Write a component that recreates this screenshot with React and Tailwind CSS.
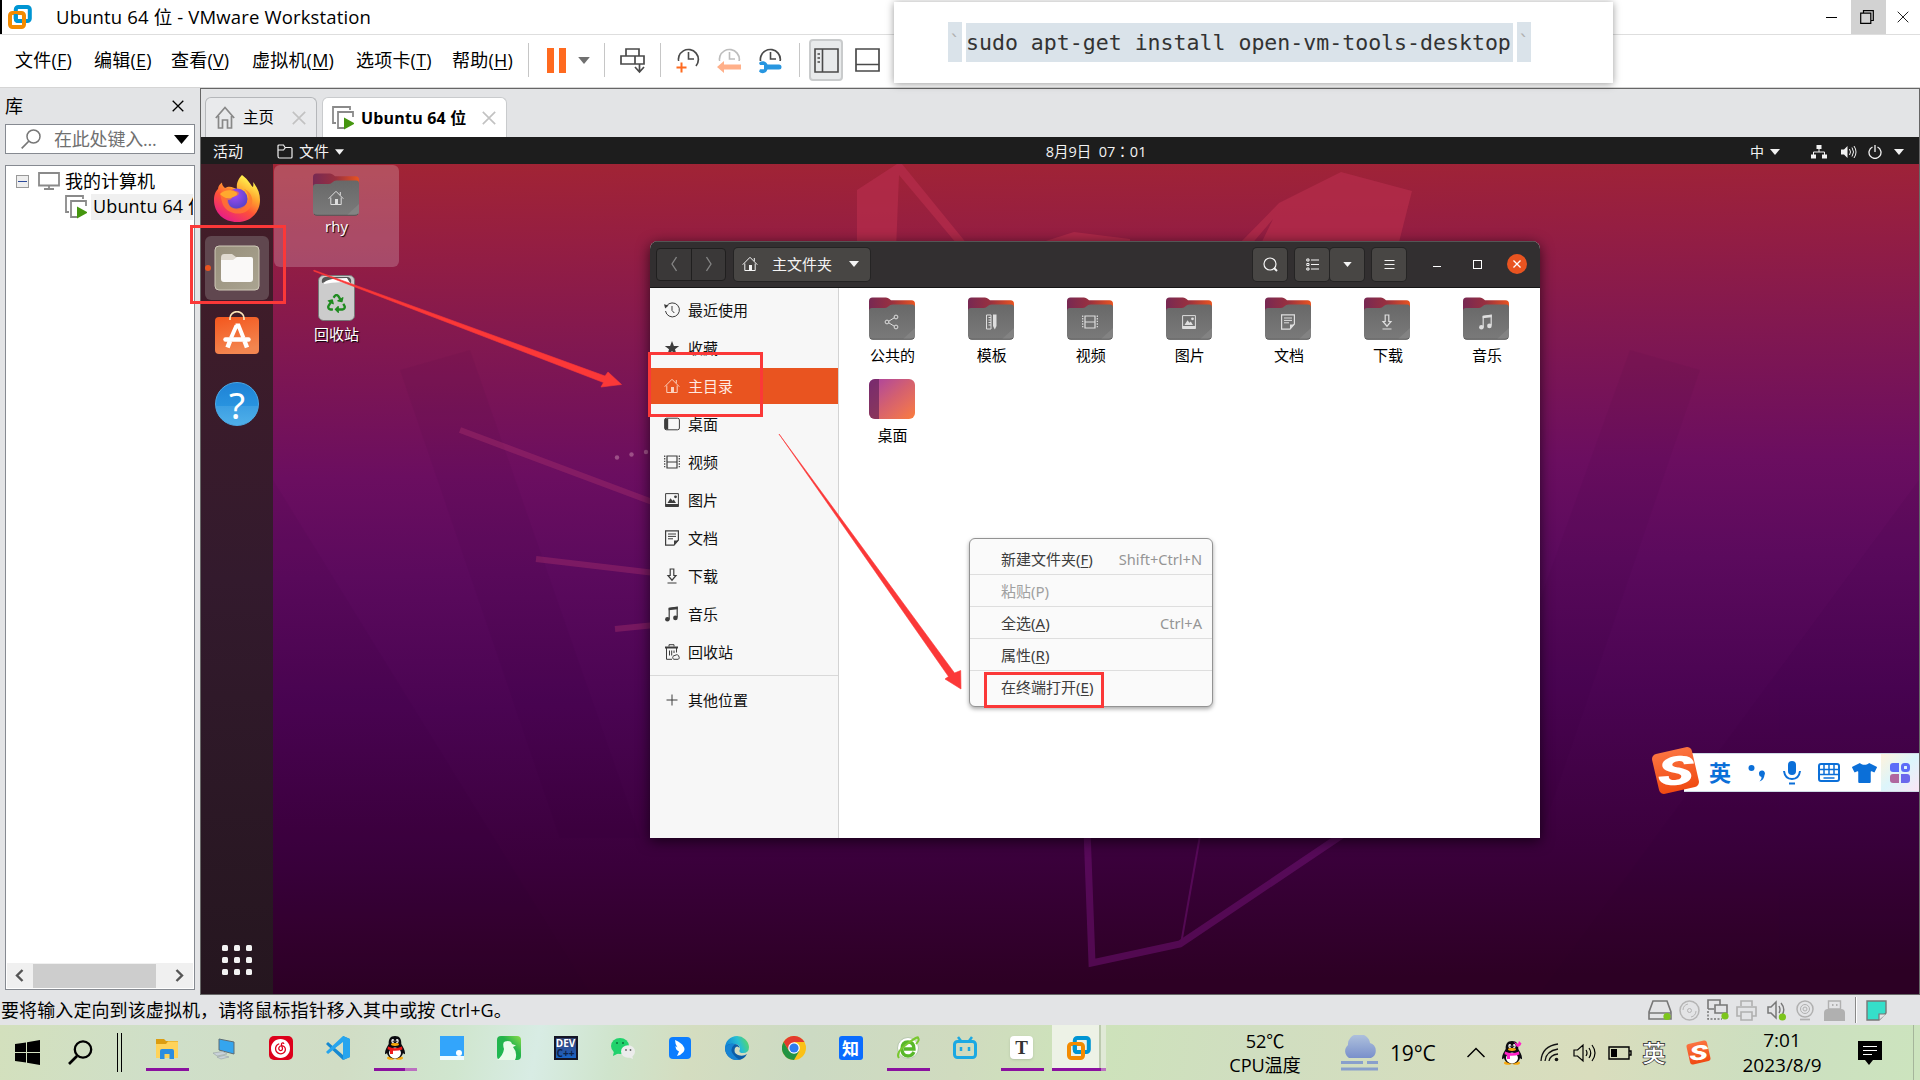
import React from "react";
import { FaRecycle, FaTshirt } from "react-icons/fa";
import { SiNeteasecloudmusic } from "react-icons/si";

const UI = "font-['Open_Sans','Noto_Sans_CJK_SC',sans-serif]";

/* ---------- shared glyphs ---------- */
const Svg = ({ w, h, vb, className = "", children }) => (
  <svg width={w} height={h} viewBox={vb || `0 0 ${w} ${h}`} fill="none" className={`shrink-0 ${className}`}>{children}</svg>
);
const Tri = ({ w = 10, h = 6, className = "" }) => (
  <Svg w={w} h={h} vb="0 0 10 6" className={className}><path d="M0 0H10L5 6Z" fill="currentColor" /></Svg>
);
const VmwareLogo = ({ size = 24 }) => (
  <Svg w={size} h={size} vb="0 0 24 24">
    <rect x="7.8" y="2" width="14" height="14" rx="2.5" stroke="#0095d3" strokeWidth="4" />
    <rect x="2" y="8" width="14" height="14" rx="2.5" stroke="#f38b00" strokeWidth="4" />
    <path d="M7.8 9V13.5Q7.8 16 10.3 16H14" stroke="#0095d3" strokeWidth="4" />
  </Svg>
);
const VmIcon = () => (
  <Svg w={22} h={24}>
    <path d="M4 17H1V1H18V4" stroke="#8a8a8a" strokeWidth="1.8" />
    <path d="M12 22H6V6H21V11" stroke="#8a8a8a" strokeWidth="1.8" />
    <path d="M12 11.5L23 17.5L12 23.5Z" fill="#45960f" />
  </Svg>
);
const Cross = ({ s = 12, c = "#000", sw = 1.3 }) => (
  <Svg w={s} h={s} vb="0 0 12 12"><path d="M.7.7L11.3 11.3M11.3.7L.7 11.3" stroke={c} strokeWidth={sw} /></Svg>
);

/* 16px symbolic icons used in the sidebar and on folders */
const SYM = {
  recent: <><path d="M2.6 4A7 7 0 1 1 1.5 9" stroke="currentColor" /><path d="M0 2.2L1.2 6.4L4.6 3.6Z" fill="currentColor" /><path d="M8 4V8.5L10.3 11" stroke="currentColor" /></>,
  star: <path d="M8 1L9.9 6H15.2L11 9.2L12.5 14.4L8 11.3L3.5 14.4L5 9.2L.8 6H6.100Z" fill="currentColor" />,
  home: <><path d="M.7 8.7L8 1.300L15.300 8.700M12.300 2V5.200M2.800 7.500V14.500H13.200V7.500" stroke="currentColor" /><path d="M7 9H10V15H7Z" fill="currentColor" /></>,
  desktop: <><rect x=".6" y="2.200" width="14.800" height="11.600" rx="1.800" stroke="currentColor" /><path d="M1 2.500H4.200V13.500H1Z" fill="currentColor" /></>,
  video: <><path d="M.7 1.500V14.500M15.300 1.500V14.500" stroke="currentColor" strokeDasharray="1.400 1.200" strokeWidth="1.200" /><path d="M3 2H13V14H3ZM3 8H13" stroke="currentColor" strokeWidth="1.200" /></>,
  image: <><path d="M1.600 1.600H14.400V14.400H1.600Z" stroke="currentColor" /><path d="M1.500 12H14.500V15H1.500ZM3.500 11L6.500 6.200L8.500 8.800L9.800 7.600L12 11Z" fill="currentColor" /><circle cx="11.500" cy="4.800" r="1.400" fill="currentColor" /></>,
  doc: <><path d="M14.400 10V.9H1.600V15.100H10Z" stroke="currentColor" strokeWidth="1.200" /><path d="M4 4H12M4 6.400H12M4 8.800H9" stroke="currentColor" /><path d="M10 10.500H14.500L10 15Z" fill="currentColor" /></>,
  down: <path d="M6.200 1H9.800V7.500H12L8 12.200L4 7.500H6.200ZM3.500 15H12.500" stroke="currentColor" strokeWidth="1.200" />,
  music: <><path d="M5.200 13V2.300L13.200 1.300V11.500" stroke="currentColor" strokeWidth="1.200" /><path d="M4.700 1.900L13.700.7V3.200L4.700 4.200Z" fill="currentColor" /><circle cx="3.400" cy="13.200" r="2.300" fill="currentColor" /><circle cx="11.400" cy="11.900" r="2.300" fill="currentColor" /></>,
  trash: <><path d="M1 3.500H14" stroke="currentColor" strokeWidth="2" /><path d="M5 2.500V.7H10V2.500M2.500 4V15.300H8M5.500 6.500V11.500M7.700 6.500V11.500M10 6.500V9M12.500 4V8.500" stroke="currentColor" /><path d="M9 14.500A2 2 0 0 1 11 11.500A2.300 2.300 0 0 1 15 13A1.500 1.500 0 0 1 14 15.300H10A1 1 0 0 1 9 14.500Z" stroke="currentColor" /></>,
  plus: <path d="M8 2.500V13.500M2.500 8H13.500" stroke="currentColor" />,
  share: <><path d="M11.500 3L3.500 8L11.500 13" stroke="currentColor" /><circle cx="12" cy="3" r="1.900" fill="#707070" stroke="currentColor" /><circle cx="3" cy="8" r="1.900" fill="#707070" stroke="currentColor" /><circle cx="12" cy="13" r="1.900" fill="#707070" stroke="currentColor" /></>,
  template: <><path d="M3.500 1H8V15H3.500Z" stroke="currentColor" /><path d="M5.500 3.500H8M5.500 6H8M5.500 8.500H8M5.500 11H8" stroke="currentColor" /><path d="M10 .5H13.500V12L11.800 15.500L10 12Z" fill="currentColor" /></>,
};
const Sym = ({ name, className = "" }) => <Svg w={16} h={16} className={className}>{SYM[name]}</Svg>;

const Folder = ({ name }) => (
  <div className="-ml-[2px] grid h-[42px] w-[46px] shrink-0">
    <Svg w={46} h={43} className="col-start-1 row-start-1">
      <defs>
        <linearGradient id="fback" x1="0" x2="1"><stop stopColor="#772953" /><stop offset=".5" stopColor="#99303f" /><stop offset="1" stopColor="#e95420" /></linearGradient>
        <linearGradient id="ffront" x1="0" y1="0" x2="0" y2="1"><stop stopColor="#686868" /><stop offset="1" stopColor="#7a7a7a" /></linearGradient>
      </defs>
      <path d="M0 4Q0 .5 3.500 .5H17Q19 .5 20.500 2L22 3.300H42.500Q46 3.300 46 7V20H0Z" fill="url(#fback)" />
      <path d="M0 14Q0 11 3 11H16Q18 11 19.500 9.300Q21 7.500 23.500 7.500H43Q46 7.500 46 10.500V38.500Q46 42.500 42 42.500H4Q0 42.500 0 38.500Z" fill="url(#ffront)" />
      <path d="M34 42L46 31V38.500Q46 42 42 42Z" fill="#888" opacity=".7" />
      <path d="M1 41Q2 42.300 4 42.300H42Q44 42.300 45 41" stroke="#4a4a4a" strokeWidth=".8" />
    </Svg>
    <Sym name={name} className="col-start-1 row-start-1 mt-[17px] ml-[15px] text-[#dedede]" />
  </div>
);

/* ---------- VMware chrome ---------- */
function TitleBar() {
  return (
    <div className="flex h-[35px] shrink-0 border-b border-[#dedede] bg-white">
      <div className="h-[34px] w-[2px] bg-black" />
      <div className="flex flex-1 items-center pl-[6px]">
        <VmwareLogo />
        <span className="ml-6 -mt-px text-[18.500px] tracking-[0.150px]">Ubuntu 64 位 - VMware Workstation</span>
      </div>
      <div className="flex w-[26px] items-center pl-px"><div className="h-px w-[11px] bg-black" /></div>
      <div className="grid w-[35px] place-items-center bg-[#d2d2d2] pr-[4px]">
        <Svg w={14} h={14}><path d="M3.500 3V.7H13.300V10.500H11M.7 3.200H10.800V13.300H.7Z" stroke="#000" strokeWidth="1.200" /></Svg>
      </div>
      <div className="flex w-[34px] items-center pl-[11px]"><Cross c="#222" sw={1} /></div>
    </div>
  );
}

const MenuItem = ({ t, k, w }) => (
  <div className={`${w} shrink-0 whitespace-nowrap text-[18px] tracking-[0.200px]`}>{t}(<span className="underline decoration-1 underline-offset-2">{k}</span>)</div>
);
const Sep = () => <div className="h-[34px] w-px shrink-0 bg-[#c6c6c6]" />;
const Clock = ({ c = "#4a4a4a", children }) => (
  <Svg w={25} h={28}><path d="M3 17A10 10 0 1 1 20 20" stroke={c} strokeWidth="1.700" /><path d="M12.500 6V13H18" stroke={c} strokeWidth="1.600" />{children}</Svg>
);

function MenuBar() {
  return (
    <div className="flex h-[53px] shrink-0 items-center border-b border-[#d5d5d5] bg-white pb-[2px] pl-[15px] text-black">
      <MenuItem t="文件" k="F" w="w-[79px]" />
      <MenuItem t="编辑" k="E" w="w-[77px]" />
      <MenuItem t="查看" k="V" w="w-[81px]" />
      <MenuItem t="虚拟机" k="M" w="w-[104px]" />
      <MenuItem t="选项卡" k="T" w="w-[96px]" />
      <MenuItem t="帮助" k="H" w="w-[76px]" />
      <Sep />
      <div className="ml-[18px] flex gap-[5px]"><div className="h-[25px] w-[7px] bg-[#ff6a1f]" /><div className="h-[25px] w-[7px] bg-[#ff6a1f]" /></div>
      <Tri w={12} h={7} className="ml-3 text-[#707070]" />
      <div className="w-[14px]" />
      <Sep />
      <Svg w={26} h={27} className="ml-[15px]"><path d="M6 2H19V9H6ZM1 9H15V17H1ZM15 9H24V17H15ZM19.500 17V24M15 20L19.500 25L24 20" stroke="#4a4a4a" strokeWidth="1.700" /></Svg>
      <div className="w-[14px]" />
      <Sep />
      <div className="ml-[15px] flex gap-4">
        <Clock><path d="M0 15H10V28H0Z" fill="#fff" /><path d="M5.500 16.500V26.500M.5 21.500H10.500" stroke="#ff6a1f" strokeWidth="2" /></Clock>
        <Clock c="#bdbdbd"><path d="M0 15H24V28H0Z" fill="#fff" /><path d="M0 21L7 15V18.500H24V23.500H7V27Z" fill="#ffb08a" /></Clock>
        <Clock><path d="M0 15H24V28H0Z" fill="#fff" /><path d="M1 17A5 5 0 0 1 9.500 18.500H21A2.500 2.500 0 0 1 21 23.500H9.500A5 5 0 0 1 1 25.500L2 23.300H6V19H2Z" fill="#2796e0" /></Clock>
      </div>
      <div className="w-[16px]" />
      <Sep />
      <div className="ml-[9px] grid h-[42px] w-[34px] place-items-center rounded border-2 border-[#c9cbcc] bg-[#e8eaeb]">
        <Svg w={25} h={25}><path d="M1 1H24V24H1ZM8.500 1V24M3.500 6H6M3.500 10H6M3.500 14H6" stroke="#4a4a4a" strokeWidth="1.600" /></Svg>
      </div>
      <Svg w={25} h={24} className="ml-[12px]"><path d="M1 1H24V23H1ZM1 16.500H24" stroke="#4a4a4a" strokeWidth="1.700" /></Svg>
    </div>
  );
}

function CommandPopup() {
  return (
    <div className="absolute top-[2px] left-[894px] z-20 flex h-[81px] w-[719px] items-center bg-white pb-px pl-[54px] font-['DejaVu_Sans_Mono',monospace] shadow-[0_1px_8px_rgba(0,0,0,0.4)]">
      <div className="h-10 w-[14px] bg-[#dae3ea] text-center text-[20px] leading-10 text-[#b0b0b0]">`</div>
      <div className="ml-1 h-[39px] w-[547px] bg-[#dae3ea] text-[21.550px] leading-[40px] whitespace-nowrap text-[#333]">sudo apt-get install open-vm-tools-desktop</div>
      <div className="ml-1 h-10 w-[14px] bg-[#dae3ea] text-center text-[20px] leading-10 text-[#b0b0b0]">`</div>
    </div>
  );
}

function Library() {
  return (
    <div className="flex w-[200px] shrink-0 flex-col pl-[5px]">
      <div className="flex h-[36px] items-center pr-[16px]">
        <span className="flex-1 text-[18px]">库</span><Cross s={12} />
      </div>
      <div className="flex h-[30px] w-[190px] items-center border border-[#868a91] bg-white pl-[15px]">
        <Svg w={20} h={20}><circle cx="12.500" cy="7.500" r="6.500" stroke="#777" strokeWidth="1.500" /><path d="M8 12L.7 19.300" stroke="#777" strokeWidth="1.700" /></Svg>
        <span className="ml-[13px] flex-1 text-[18px] tracking-[-0.200px] whitespace-nowrap text-[#707070]">在此处键入...</span>
        <Tri w={15} h={9} className="mr-[5px]" />
      </div>
      <div className="mt-[11px] flex h-[825px] w-[190px] flex-col border border-[#868a91] bg-white p-px">
        <div className="mt-px flex h-[26px] items-center pl-[9px]">
          <div className="mt-px grid size-[13px] place-items-center border border-[#999] bg-[#eee]"><div className="h-px w-[9px] bg-[#2c4a9a]" /></div>
          <Svg w={22} h={18} className="ml-[9px]"><path d="M1 1H21V13.500H1ZM11 13.500V17M6 17H16" stroke="#8a8a8a" strokeWidth="1.800" /></Svg>
          <span className="ml-[5px] text-[18px]">我的计算机</span>
        </div>
        <div className="flex h-[26px] items-center overflow-hidden pl-[58px]">
          <VmIcon />
          <div className="ml-1 h-[26px] w-[102px] shrink-0 overflow-hidden bg-[#f0f0f0] pl-[2px] text-[18px] leading-[25px] tracking-[0.150px] whitespace-nowrap">Ubuntu 64 位</div>
        </div>
        <div className="flex-1" />
        <div className="flex h-[25px] items-center bg-[#f0f0f0]">
          <Svg w={9} h={13} className="ml-[8px]"><path d="M7.500 1L2 6.500L7.500 12" stroke="#555" strokeWidth="2.400" /></Svg>
          <div className="ml-[9px] h-6 w-[123px] bg-[#cdcdcd]" />
          <Svg w={9} h={13} className="ml-[19px]"><path d="M1.500 1L7 6.500L1.500 12" stroke="#555" strokeWidth="2.400" /></Svg>
        </div>
      </div>
    </div>
  );
}

function Tabs() {
  return (
    <div className="flex h-[48px] shrink-0 items-end gap-[6px] bg-[#e3e4e6] pl-1">
      <div className="flex h-[40px] w-[112px] items-center rounded-t-md border border-b-0 border-[#b5b7ba] bg-[#e9eaec] pl-[9px]">
        <Svg w={20} h={23}><path d="M.8 12L10 1.500L19.200 12M3.500 10V22H7.500V14H12.500V22H16.500V10" stroke="#888" strokeWidth="1.700" /></Svg>
        <span className="ml-[8px] flex-1 text-[15.500px]">主页</span>
        <span className="mr-[10px]"><Cross s={14} c="#c2c2c2" sw={1.400} /></span>
      </div>
      <div className="-ml-px flex h-[40px] w-[185px] items-center rounded-t-md border border-b-0 border-[#c9cbcd] bg-white pl-[9px]">
        <VmIcon />
        <span className="mt-px ml-[7px] flex-1 text-[16px] font-bold tracking-[0.200px] whitespace-nowrap">Ubuntu 64 位</span>
        <span className="mr-[10px]"><Cross s={14} c="#c2c2c2" sw={1.400} /></span>
      </div>
    </div>
  );
}

/* ---------- Ubuntu guest ---------- */
function TopBar() {
  return (
    <div className="grid h-[27px] shrink-0 grid-cols-3 items-center bg-[#1d1d1d] pt-[2px] text-[15px] text-[#f2f2f2]">
      <div className="flex items-center pl-3 text-[15px]">
        <span>活动</span>
        <Svg w={16} h={15} className="ml-[34px]"><path d="M1 12V2Q1 1 2 1H6.500L8 3.500H14Q15 3.500 15 4.500V13Q15 14 14 14H2.500Q1 14 1 12ZM1 6H6.500L8.500 3.500" stroke="currentColor" strokeWidth="1.200" /></Svg>
        <span className="ml-[6px]">文件</span>
        <Tri w={9} className="ml-[6px]" />
      </div>
      <div className="pl-[272px] text-[14.500px] whitespace-pre">8月9日  07<span className="font-['Noto_Sans_CJK_TC',sans-serif]" lang="zh-TW">：</span>01</div>
      <div className="flex items-center justify-end pr-[15px]">
        <span className="text-[14px]">中</span>
        <Tri className="mr-[31px] ml-[6px]" />
        <Svg w={16} h={14}><path d="M5.500 0H10.500V4H5.500ZM0 9.500H5V13.500H0ZM11 9.500H16V13.500H11Z" fill="currentColor" /><path d="M8 4V7M2.500 10V7H13.500V10" stroke="currentColor" /></Svg>
        <Svg w={16} h={14} className="ml-[14px]"><path d="M0 4.500H3L6.500 1V13L3 9.500H0Z" fill="currentColor" /><path d="M8.500 4Q10.500 7 8.500 10M11 2.500Q14 7 11 11.500M13 1Q17 7 13 13" stroke="currentColor" /></Svg>
        <Svg w={14} h={14} className="ml-[11px]"><path d="M4.500 2A6 6 0 1 0 9.500 2M7 0V7" stroke="currentColor" strokeWidth="1.300" /></Svg>
        <Tri className="ml-[12px]" />
      </div>
    </div>
  );
}

const Firefox = () => (
  <Svg w={46} h={48}>
    <defs>
      <linearGradient id="ffx" x1=".85" y1="0" x2=".25" y2="1"><stop offset=".1" stopColor="#fff44f" /><stop offset=".38" stopColor="#ffa22e" /><stop offset=".62" stopColor="#ff5237" /><stop offset="1" stopColor="#e5178f" /></linearGradient>
      <radialGradient id="ffg" cx=".4" cy=".3" r=".8"><stop stopColor="#a24df5" /><stop offset="1" stopColor="#4b3fc0" /></radialGradient>
    </defs>
    <path d="M28 0C35 5 37 11 39 12C39.500 10 39.500 9 39 7C44 13 46 19 46 25C46 38 36 47 23 47C10 47 0 38 0 25C0 19 2 16 4 14C4 11 6 9 8 7.500C8 10 9 11 11 13C16 10 20 13 23 14C22 8 25 3 28 0Z" fill="url(#ffx)" />
    <circle cx="23" cy="24" r="10.500" fill="url(#ffg)" />
    <path d="M6 19C9 13 16 12 21 16C26 16 26 20 22 21C17 21 19 25 14 25C14 33 22 36 30 31C37 27 35 18 30 14C40 18 41 30 33 36C24 42 10 37 8 27Z" fill="#ff7a30" opacity=".75" />
    <path d="M6 19C10 15 16 14 22 17C25 20 21 21 17 23C12 24 9 22 6 19Z" fill="#ffa92e" />
  </Svg>
);
const FilesIcon = () => (
  <Svg w={46} h={46}>
    <defs><linearGradient id="fig" x1="0" x2="1" y2="1"><stop stopColor="#978f7b" /><stop offset="1" stopColor="#aaa491" /></linearGradient></defs>
    <rect x="1" y="1" width="44" height="44" rx="4" fill="url(#fig)" stroke="#cfc9b8" strokeWidth="1" />
    <path d="M7 13Q7 9 10 9H18L22 12H36V17H7Z" fill="#e0dad0" />
    <path d="M7 15H19L23 12H37Q39 12 39 14V34Q39 37 36 37H10Q7 37 7 34Z" fill="#faf9f8" />
  </Svg>
);
const SoftwareIcon = () => (
  <Svg w={46} h={43}>
    <defs><linearGradient id="sfg" x1="0" x2=".3" y2="1"><stop stopColor="#f4561d" /><stop offset="1" stopColor="#f38650" /></linearGradient></defs>
    <rect x="1" y="6" width="44" height="37" rx="4" fill="url(#sfg)" />
    <path d="M16 9V7A7 6.300 0 0 1 30 7V9" stroke="#fbe3b7" strokeWidth="1.700" />
    <path d="M21.500 14.500H24.500L29.500 27M22.500 14.500L17 27" stroke="#fff" strokeWidth="4" /><path d="M16 30L13.500 36.500M30.500 30L33 36.500" stroke="#fff" strokeWidth="4.500" />
    <path d="M11.500 28.500H34.500" stroke="#fff" strokeWidth="4.500" strokeLinecap="round" />
  </Svg>
);

function Dock() {
  return (
    <div className="flex w-[72px] shrink-0 flex-col items-center bg-gradient-to-b from-[#441d27] via-[#331a2d] to-[#25161f] pt-[11px]">
      <Firefox />
      <div className="mt-[13px] flex h-[64px] w-[64px] items-center rounded-md bg-[#60474f]">
        <div className="size-[6px] rounded-full bg-[#e95420]" /><span className="ml-[3px]"><FilesIcon /></span>
      </div>
      <div className="mt-[11px]"><SoftwareIcon /></div>
      <div className="mt-[28px] grid size-[44px] place-items-center rounded-full border border-[#4ba9e6] bg-[linear-gradient(#1f82d6_0%,#2893df_54%,#3c9fe3_55%,#4fafe9_100%)] font-['Noto_Sans',sans-serif] text-[37px] leading-none text-white">?</div>
      <div className="mt-auto mb-[19px] grid grid-cols-3 gap-[6px]">
        {Array.from({ length: 9 }, (_, i) => <div key={i} className="size-[6px] rounded-[1.500px] bg-[#f2f2f2]" />)}
      </div>
    </div>
  );
}

const Wallpaper = () => (
  <svg className="absolute inset-0" width="1718" height="830" viewBox="201 164 1718 830" fill="none">
    <defs><linearGradient id="wp" x1="0" y1="0" x2=".03" y2="1">
      <stop stopColor="#a22434" /><stop offset=".1" stopColor="#951e42" /><stop offset=".22" stopColor="#821850" /><stop offset=".38" stopColor="#6b0e60" /><stop offset=".5" stopColor="#5b0a5d" /><stop offset=".66" stopColor="#4a0452" /><stop offset=".85" stopColor="#3a003b" /><stop offset="1" stopColor="#2d0024" />
    </linearGradient></defs>
    <rect x="201" y="164" width="1718" height="830" fill="url(#wp)" />
    <g fill="#20002a" opacity=".045">
      <path d="M273 480L590 994H273Z" /><path d="M400 370L470 350L640 838L560 838Z" /><path d="M1919 480L1540 994H1919Z" /><path d="M1700 370L1630 350L1540 600V838Z" />
    </g>
    <g fill="#b52d4b" opacity=".72">
      <path d="M897 164L857 190V250H896L899 175L962 250H972L902 164Z" />
      <path d="M1341 172L1412 191L1397 250H1258L1273 219L1250 246H1237L1279 203Z" />
      <path d="M1030 246L1074 232L1130 239V246Z" />
    </g>
    <g stroke="#a62f6b" opacity=".42" strokeWidth="6"><path d="M460 430L655 503M536 559L655 573M615 629L655 625" /></g>
    <g fill="#a96092" opacity=".8"><circle cx="617" cy="457.500" r="2.200" /><circle cx="631.500" cy="454.500" r="2.200" /><circle cx="646" cy="452" r="2.200" /></g>
    <g stroke="#6f1272" opacity=".55"><path d="M1087 830L1092 963L1180 944L1345 833" strokeWidth="7" /><path d="M1201 830L1181 944" strokeWidth="2" /></g>
  </svg>
);

const SIDE = [
  ["recent", "最近使用"], ["star", "收藏"], ["home", "主目录"], ["desktop", "桌面"], ["video", "视频"],
  ["image", "图片"], ["doc", "文档"], ["down", "下载"], ["music", "音乐"], ["trash", "回收站"],
];
const FOLDERS = [["share", "公共的"], ["template", "模板"], ["video", "视频"], ["image", "图片"], ["doc", "文档"], ["down", "下载"], ["music", "音乐"]];
const HB = "grid h-[33px] w-[34px] place-items-center rounded-[4px] bg-[#484644] shadow-[0_0_0_1px_#252424]";

function FileWindow() {
  return (
    <div className="absolute top-[77px] left-[449px] flex h-[597px] w-[890px] flex-col overflow-hidden rounded-t-lg bg-white shadow-[0_3px_14px_rgba(0,0,0,0.65)]">
      <div className="flex h-[47px] shrink-0 items-center border-t border-b border-t-[#555] border-b-[#161616] bg-[#322f30] pb-px pl-[6px] text-[#f4f4f4]">
        <div className="flex h-[33px] w-[70px] items-center rounded-[4px] border border-[#201f1f] bg-[#3a3838] text-[#858585]">
          <div className="grid h-full w-[35px] place-items-center border-r border-[#201f1f]"><Svg w={6} h={16}><path d="M5.500 1L1 8L5.500 15" stroke="currentColor" strokeWidth="1.300" /></Svg></div>
          <div className="grid flex-1 place-items-center"><Svg w={6} h={16}><path d="M.5 1L5 8L.5 15" stroke="currentColor" strokeWidth="1.300" /></Svg></div>
        </div>
        <div className="ml-2 flex h-[33px] w-[136px] items-center rounded-[4px] bg-[#484644] pl-2 shadow-[0_0_0_1px_#252424]">
          <Sym name="home" /><span className="ml-[14px] text-[15px]">主文件夹</span><Tri className="ml-[17px]" />
        </div>
        <div className="flex-1" />
        <div className={HB}><Svg w={15} h={15}><circle cx="7" cy="7" r="6" stroke="currentColor" strokeWidth="1.200" /><path d="M11 11L14 14" stroke="currentColor" strokeWidth="2" /></Svg></div>
        <div className="ml-2 flex gap-px">
          <div className={HB}><Svg w={13} h={13}><path d="M5 2H13M5 6.500H13M5 11H13" stroke="currentColor" strokeWidth="1.200" /><path d="M.8 1H3V3H.8ZM.8 5.500H3V7.500H.8ZM.8 10H3V12H.8Z" stroke="currentColor" /></Svg></div>
          <div className={HB}><Tri w={9} h={5} /></div>
        </div>
        <div className={`ml-2 ${HB}`}><Svg w={11} h={11}><path d="M.5 1.500H10.500M.5 5.500H10.500M.5 9.500H10.500" stroke="currentColor" strokeWidth="1.200" /></Svg></div>
        <div className="mt-1 ml-[27px] h-px w-2 bg-white" />
        <div className="ml-8 h-[9px] w-[9px] border border-white" />
        <div className="mr-[13px] ml-[25px] grid size-5 place-items-center rounded-full bg-[#e95420]"><Cross s={8} c="#fff" sw={2} /></div>
      </div>
      <div className="flex min-h-0 flex-1">
        <div className="w-[189px] shrink-0 border-r border-[#d3d3d3] bg-[#f7f7f7] pt-[4px] text-[15px] text-[#111]">
          {SIDE.map(([icon, label], i) => (
            <div key={label} className={i === 2 ? "mb-[2px] flex h-9 items-center bg-[#e95420] pl-[14px] text-[#ffe9e0]" : "mb-[2px] flex h-9 items-center pl-[14px]"}>
              <Sym name={icon} className={i === 2 ? "text-[#fbd0bd]" : "text-[#3d3d3d]"} />
              <span className="ml-2">{label}</span>
            </div>
          ))}
          <div className="mt-[5px] h-px bg-[#d9d9d9]" />
          <div className="mt-[6px] flex h-9 items-center pl-[14px]"><Sym name="plus" className="text-[#3d3d3d]" /><span className="ml-2">其他位置</span></div>
        </div>
        <div className="flex-1 pt-[9px] pl-[4px] text-[15px] text-black">
          <div className="flex">
            {FOLDERS.map(([icon, label]) => (
              <div key={label} className="flex h-[82px] w-[99.100px] flex-col items-center"><Folder name={icon} /><span className="mt-[5px] leading-[22px]">{label}</span></div>
            ))}
          </div>
          <div className="flex w-[99px] flex-col items-center">
            <div className="-ml-[2px] flex h-[40px] w-[46px] overflow-hidden rounded-md bg-gradient-to-br from-[#a93ca2] via-[#d4606f] to-[#fb7c38]"><div className="w-[10px] bg-[#5d1f55]/65" /></div>
            <span className="mt-[5px] leading-[22px]">桌面</span>
          </div>
        </div>
      </div>
    </div>
  );
}

const MENU = [["新建文件夹", "F", "Shift+Ctrl+N"], ["粘贴", "P", ""], ["全选", "A", "Ctrl+A"], ["属性", "R", ""], ["在终端打开", "E", ""]];
const ContextMenu = () => (
  <div className="absolute top-[374px] left-[768px] h-[169px] w-[244px] rounded-[6px] border border-[#939393] bg-[#fafafa] pt-[4px] font-['Noto_Sans','Noto_Sans_CJK_SC',sans-serif] text-[15px] text-[#3d3d3d] shadow-[0_2px_4px_rgba(0,0,0,0.35)]">
    {MENU.map(([t, k, s], i) => (
      <div key={t} className={i < 4 ? "flex h-8 items-center border-b border-[#dedede] pt-[2px] pr-[10px] pl-[31px]" : "flex h-8 items-center pr-[10px] pl-[31px]"}>
        <span className={i === 1 ? "flex-1 text-[#a0a0a0]" : "flex-1"}>{t}(<span className={i === 1 ? "" : "underline underline-offset-2"}>{k}</span>)</span>
        <span className="text-[14.600px] text-[#959595]">{s}</span>
      </div>
    ))}
  </div>
);

/* Red annotation boxes and arrows, in page coordinates. */
const Annotations = () => (
  <svg className="pointer-events-none absolute inset-0 z-10" width="1920" height="1080" viewBox="0 0 1920 1080" fill="none">
    <g stroke="#fb3838" strokeWidth="3">
      <rect x="191.500" y="226.500" width="93" height="76" /><rect x="649.500" y="353.500" width="112" height="62" /><rect x="985.500" y="673.500" width="117" height="33" />
    </g>
    <g fill="#fb3838">
      <path d="M313.500 271L314 270.200L605 376L608 372L621.500 384.500L601 387L603.500 382.500Z" stroke="#fb3838" strokeWidth=".6" />
      <path d="M779 434L954.500 673L960.700 670.500L961 689L945 679L948.500 676.500Z" stroke="#fb3838" strokeWidth=".6" />
    </g>
  </svg>
);

const SogouLogo = ({ size }) => (
  <Svg w={size} h={size} vb="0 0 48 48" className="overflow-visible">
    <defs><linearGradient id="sg" x1="0" x2="0" y2="1"><stop stopColor="#fb7340" /><stop offset="1" stopColor="#f04a12" /></linearGradient></defs>
    <rect x="4" y="4" width="40" height="40" rx="5" transform="rotate(-13 24 24)" fill="url(#sg)" />
    <text x="24" y="38" transform="rotate(-4 24 24)" textAnchor="middle" fontFamily="Roboto, sans-serif" fontWeight="900" fontSize="39" textLength="36" lengthAdjust="spacingAndGlyphs" fill="#fff" fontStyle="italic">S</text>
  </Svg>
);
const InputBar = () => (
  <div className="absolute top-[753px] left-[1684px] z-10 flex h-[39px] w-[235px] items-center border-y border-[#cfdbe5] bg-white text-[#0b6fd8]">
    <div className="-mt-[4px] -ml-[33px] flex"><SogouLogo size={49} /></div>
    <span className="ml-[9px] -mt-[2px] text-[22px] leading-none font-bold">英</span>
    <Svg w={19} h={20} className="ml-[17px]"><circle cx="3.500" cy="5" r="3" fill="currentColor" /><path d="M11 11A3 3 0 1 1 16.500 12Q16 17 11.500 18.500Q14 16 13.500 14Q11 13.500 11 11Z" fill="currentColor" /></Svg>
    <Svg w={18} h={24} className="ml-[16px]"><rect x="5" y="0" width="8" height="14" rx="4" fill="currentColor" /><path d="M1 10Q2 18 9 18Q16 18 17 10M6 22.500H12" stroke="currentColor" strokeWidth="2" /></Svg>
    <Svg w={22} h={19} className="ml-[17px]"><rect x="1" y="1" width="20" height="17" rx="2" stroke="currentColor" strokeWidth="2" /><path d="M1 6.500H21M1 11.500H21M6 2V12M11 2V12M16 2V12M5.500 15H16.500" stroke="currentColor" strokeWidth="1.500" /></Svg>
    <FaTshirt className="ml-[12px] h-[22px] w-[25px] shrink-0" />
    <div className="ml-[4px] grid h-full flex-1 place-items-center bg-gradient-to-br from-[#fff3dc] via-[#dcf5fb] to-[#fbe6f6]">
      <Svg w={20} h={20}><path d="M0 3Q0 0 3 0H9V9H3Q0 9 0 6Z" fill="#5b6df8" /><rect x="12.500" y="1.500" width="6" height="6" rx="2" stroke="#5b6df8" strokeWidth="3" /><path d="M0 14Q0 11 3 11H9V20H3Q0 20 0 17Z" fill="#b0679f" /><path d="M11 11H17Q20 11 20 14V17Q20 20 17 20H11Z" fill="#6a68ec" /></Svg>
    </div>
  </div>
);

/* ---------- status bar and Windows taskbar ---------- */
const Dot = ({ x, y }) => <circle cx={x} cy={y} r="3.600" fill="#7cc51c" />;
const StatusBar = () => (
  <div className="flex h-[30px] shrink-0 items-center bg-[#e3e4e6] pl-px text-[18px]">
    <span className="flex-1 tracking-[0.100px]">要将输入定向到该虚拟机，请将鼠标指针移入其中或按 Ctrl+G。</span>
    <div className="flex items-center pr-[33px] text-[#777]">
      <Svg w={24} h={21}><path d="M5 1H19L23 12V19H1V12ZM1 13H23" stroke="currentColor" strokeWidth="1.600" /><Dot x="19" y="16.500" /></Svg>
      <Svg w={21} h={21} className="ml-[7px] text-[#b5b5b5]"><circle cx="10.500" cy="10.500" r="9.500" stroke="currentColor" strokeWidth="1.500" /><circle cx="10.500" cy="10.500" r="2" stroke="currentColor" /><path d="M4 10A6.500 6.500 0 0 1 9 4M17 11A6.500 6.500 0 0 1 12 17" stroke="currentColor" /></Svg>
      <Svg w={22} h={22} className="ml-[7px]"><path d="M1 10V1H13V6M1 10H7M8 6H20V14H8Z" stroke="currentColor" strokeWidth="1.600" /><path d="M1 12V20H15" stroke="currentColor" strokeDasharray="2 1.500" strokeWidth="1.500" /><Dot x="18" y="17" /></Svg>
      <Svg w={21} h={21} className="ml-[7px] text-[#b0b0b0]"><path d="M5 6V1H16V6M5 16H1V7H20V16H16M5 12H16V20H5Z" stroke="currentColor" strokeWidth="1.600" /></Svg>
      <Svg w={19} h={21} className="ml-[10px]"><path d="M1 7H4L9 2V18L4 13H1Z" stroke="currentColor" strokeWidth="1.500" /><path d="M12 6Q14 10 12 13M14 3Q19 9 15 15" stroke="currentColor" strokeWidth="1.400" /><Dot x="15.400" y="17" /></Svg>
      <Svg w={18} h={21} className="ml-[10px] text-[#b0b0b0]"><circle cx="9" cy="9" r="8" stroke="currentColor" strokeWidth="1.500" /><circle cx="9" cy="9" r="4.500" stroke="currentColor" /><circle cx="9" cy="9" r="2" stroke="currentColor" /><path d="M4 19.500H14" stroke="currentColor" strokeWidth="1.700" /></Svg>
      <Svg w={21} h={21} className="ml-[10px] text-[#b0b0b0]"><path d="M4.500 1H16.500V9H4.500Z" stroke="currentColor" strokeWidth="1.400" /><path d="M8 4H9.500V6H8ZM12 4H13.500V6H12ZM0 13Q0 9 4 9H17Q21 9 21 13V21H0Z" fill="currentColor" /></Svg>
      <div className="ml-[10px] h-[26px] w-[2px] border-l border-[#888] bg-white" />
      <Svg w={21} h={21} className="ml-[9px]"><path d="M1 1H20V13L13 20H1Z" fill="#35dfca" stroke="#777" strokeWidth="1.400" /><path d="M13 20V14H20" fill="#e3e4e6" stroke="#777" strokeWidth="1.200" /></Svg>
    </div>
  </div>
);

const QQ = ({ scarf = "#ef1a1a", bow }) => (
  <Svg w={20} h={24}>
    <ellipse cx="6" cy="22" rx="4" ry="1.800" fill="#f8a90c" /><ellipse cx="14" cy="22" rx="4" ry="1.800" fill="#f8a90c" />
    <path d="M10 0C5 0 3.500 3.500 3.700 8C2 11 0 14 0 17C0 19 1 18 2 17C3 21 6 22.500 10 22.500S17 21 18 17C19 18 20 19 20 17C20 14 18 11 16.300 8C16.500 3.500 15 0 10 0Z" fill="#0b0b10" />
    <ellipse cx="10" cy="17" rx="6" ry="5.400" fill="#fff" /><ellipse cx="7.800" cy="5" rx="1.500" ry="2" fill="#fff" /><ellipse cx="12.200" cy="5" rx="1.500" ry="2" fill="#fff" />
    <circle cx="8.200" cy="5.200" r=".7" fill="#000" /><circle cx="11.800" cy="5.200" r=".7" fill="#000" /><ellipse cx="10" cy="8.500" rx="4" ry="1.400" fill="#f8a90c" />
    <path d="M3 10.500Q10 14 17 10.500L17.500 13.500Q13 15 8 14.700V18H5V14L2.500 13.300Z" fill={scarf} />
    {bow && <path d="M12 1L16 3L17 0L19.500 2.500L18 5L15 6Z" fill="#ff22c8" />}
  </Svg>
);

const APPS = [
  { i: <Svg w={24} h={24}><path d="M1 3H9L11 5H23V21H1Z" fill="#dc9d10" /><path d="M1 8H11L13 5.500H23V22H1Z" fill="#ffd35a" /><path d="M5 23V15Q5 13 7 13H17Q19 13 19 15V23H14.500V18H9.500V23Z" fill="#2c8de0" /></Svg>, u: "w-[43px] bg-[#8a119f]" },
  { i: <Svg w={24} h={24}><path d="M7 3L22 6V18L7 14Z" fill="#35a5ee" stroke="#5e6c75" /><path d="M1 17L11 15.500L15 18L5 20ZM5 21L12 19.500L17 21L9 23Z" fill="#c9d2d8" stroke="#8d979d" strokeWidth=".5" /></Svg> },
  { i: <div className="grid size-6 place-items-center rounded-[5px] bg-[#dd001b] text-white"><SiNeteasecloudmusic size={19} /></div> },
  { i: <Svg w={24} h={24}><path d="M17 0L24 3V21L17 24L2 10L0 8L2 6L17 19Z" fill="#1588d0" /><path d="M17 0L24 3V21L17 24V6L2 18L0 16L2 14Z" fill="#27a5ee" /><path d="M17 6.500V17.500L9.500 12Z" fill="#d3e0c9" /></Svg> },
  { i: <QQ />, u: "w-[43px] bg-[linear-gradient(90deg,#8a119f_72%,#bb70c0_72%)]" },
  { i: <div className="flex size-6 items-end justify-end border-b-4 border-[#f0fbff] bg-[#33a5fb]"><div className="mr-[2px] size-[6px] rounded-full bg-white" /></div> },
  { i: <Svg w={24} h={24}><defs><linearGradient id="brd" x1="0" x2="1" y1="1" y2="0"><stop stopColor="#1db954" /><stop offset=".6" stopColor="#25b34b" /><stop offset="1" stopColor="#8bdc4a" /></linearGradient></defs><rect width="24" height="24" rx="4" fill="url(#brd)" /><path d="M0 24Q6 20 7 13Q5 6 8 5.500Q14 4 15 8L19 9.500L16 11Q21 17 18 24Z" fill="#eafbea" /></Svg> },
  { i: <div className="flex h-6 w-6 flex-col items-center border-2 border-[#151525] bg-gradient-to-b from-[#303d6c] to-[#1665c8] text-[10px] leading-[10px] font-bold text-white"><span>DEV</span><span className="text-[#0d2146]">C++</span></div> },
  { i: <Svg w={24} h={24}><ellipse cx="9" cy="10" rx="9" ry="8" fill="#20d26c" /><path d="M3 15L2 20L8 17Z" fill="#20d26c" /><ellipse cx="17" cy="15.500" rx="7" ry="6.200" fill="#ececec" /><path d="M21 19L22 23L17 21Z" fill="#ececec" /><circle cx="6" cy="7" r="1" fill="#08753a" /><circle cx="12" cy="7" r="1" fill="#08753a" /><circle cx="15" cy="14" r=".9" fill="#666" /><circle cx="19.500" cy="14" r=".9" fill="#666" /></Svg> },
  { i: <Svg w={24} h={24}><rect x="1" y="1" width="22" height="22" rx="4" fill="#0c7dff" /><path d="M7 4Q14 7 15.500 10.500Q17.500 13 15.500 16Q13 19 9 20L11 15.500Q7.500 14 7.500 10L9.500 11.500Q7 8 7 4Z" fill="#fff" /></Svg> },
  { i: <Svg w={24} h={24}><defs><linearGradient id="edg" x1="0" x2="1" y1=".3"><stop stopColor="#1187d8" /><stop offset=".5" stopColor="#27bfd2" /><stop offset="1" stopColor="#65dc4e" /></linearGradient></defs><path d="M12 0A12 12 0 0 1 24 11Q24 17 18 17Q13 17 15 13Q15 8 9 8Q4 8 0 12A12 12 0 0 1 12 0Z" fill="url(#edg)" /><path d="M0 12Q3 7 9 8Q14 8 14.500 12Q12 9 10 12Q8 17 13 19Q18 21 22 18Q19 24 12 24A12 12 0 0 1 0 12Z" fill="#0b5da8" /><path d="M0 12Q3 7 10 8Q4 13 8 18T15 23.600A12 12 0 0 1 0 12Z" fill="#1683d3" /></Svg> },
  { i: <Svg w={24} h={24}><circle cx="12" cy="12" r="12" fill="#fbc116" /><path d="M1.600 6A12 12 0 0 1 22.400 6H12V12L7 15Z" fill="#e33b2e" /><path d="M1.600 6A12 12 0 0 0 12 24L17.200 15L12 12L7 15Z" fill="#229342" /><circle cx="12" cy="12" r="5.800" fill="#fff" /><circle cx="12" cy="12" r="4.600" fill="#2e7cf0" /></Svg> },
  { i: <div className="grid size-6 place-items-center rounded-[3px] bg-[#0a6cff] text-[17px] leading-none font-bold text-white">知</div> },
  { i: <Svg w={24} h={24}><circle cx="12" cy="12" r="10.500" fill="#fff" stroke="#b7c8ae" /><path d="M18 16Q16 20 12 20Q6 20 6 13T12 6Q18 6 18 13H8" stroke="#59b82a" strokeWidth="3.300" /><path d="M3 22Q-1 17 11 8T22 2Q24 4 20 8" stroke="#79c82f" strokeWidth="2" /></Svg>, u: "w-[43px] bg-[#8a119f]" },
  { i: <Svg w={24} h={24}><rect x="1.500" y="5.500" width="21" height="16" rx="3" stroke="#1ba9e3" strokeWidth="3" /><path d="M5 1L8 5M19 1L16 5M8 11V15M16 11V15" stroke="#1ba9e3" strokeWidth="2.500" /></Svg> },
  { i: <div className="grid size-[23px] place-items-center rounded-[4px] bg-white font-['Liberation_Serif',serif] text-[19px] leading-none font-bold text-[#333] shadow-sm">T</div>, u: "w-[43px] bg-[#8a119f]" },
];

function Taskbar() {
  return (
    <div className="flex h-[55px] shrink-0 bg-[linear-gradient(100deg,#d3e0bd_0%,#cfdfc9_9%,#d1ddc5_18%,#d0e6cf_24%,#d8ece4_28%,#cfe4cc_32%,#d4ddc0_36%,#ccdac3_42%,#d0dbbf_50%,#cde3ba_56%,#d0dec0_65%,#d9ddbd_83%,#ccdfc0_92%,#cce4be_100%)]">
      <div className="flex h-[54px] items-center">
        <Svg w={25} h={25} className="ml-[15px]"><path d="M0 4L11 2.500V12H0ZM12 2.300L25 0V12H12ZM0 13H11V22.500L0 21ZM12 13H25V25L12 22.800Z" fill="#000" /></Svg>
        <Svg w={25} h={25} className="ml-[28px]"><circle cx="15" cy="9.500" r="8.200" stroke="#000" strokeWidth="2.300" /><path d="M9 16L1 24" stroke="#000" strokeWidth="2.600" /></Svg>
        <div className="ml-[24px] h-[39px] w-[5px] border-x border-black" />
      </div>
      <div className="ml-[17px] flex">
        {APPS.map((a, n) => (
          <div key={n} className="flex h-[46px] w-[57px] flex-col items-center pt-[11px]">
            <div className="-ml-[2px]">{a.i}</div>
            {a.u && <div className={`mt-auto h-[3px] ${a.u}`} />}
          </div>
        ))}
        <div className="ml-px flex h-[46px]">
          <div className="flex w-[49px] flex-col border-r-2 border-[#bccaae] bg-[#edf2e6]"><div className="pt-[11px] pl-[15px]"><VmwareLogo /></div><div className="mt-auto h-[3px] w-[50px] bg-[#8a119f]" /></div>
          <div className="flex w-[5px] flex-col bg-[#e0e9d6]"><div className="mt-auto h-[3px] bg-[#bb70c0]" /></div>
        </div>
      </div>
      <div className="ml-auto flex items-center whitespace-nowrap text-black">
        <div className="w-20 text-center text-[18.200px] leading-6 tracking-[-0.150px]"><div>52℃</div><div>CPU温度</div></div>
        <Svg w={38} h={36} className="ml-[36px]"><defs><linearGradient id="cld" x1="0" x2="0" y2="1"><stop stopColor="#b0c2dd" /><stop offset="1" stopColor="#7990cb" /></linearGradient></defs><path d="M8 23A8 8 0 0 1 7 10A11 10 0 0 1 29 8A8 8 0 0 1 30 23Z" fill="url(#cld)" /><path d="M0 27.500H22M26 27.500H37M0 34H37" stroke="#899fcc" strokeWidth="3" /></Svg>
        <div className="ml-[11px] w-[50px] text-[21px] leading-7 tracking-[-0.150px]">19°C</div>
        <Svg w={18} h={11} className="ml-[27px]"><path d="M.5 10L9 1.500L17.500 10" stroke="#000" strokeWidth="1.500" /></Svg>
        <div className="ml-[17px]"><QQ scarf="#ff22c8" bow /></div>
        <Svg w={19} h={19} className="ml-[18px]"><path d="M1 18Q2 3 18 1M5 18Q6 8 18 6M9 18Q10 12 18 11" stroke="#111" strokeWidth="1.300" /><circle cx="16.500" cy="16.500" r="1.800" fill="#111" /></Svg>
        <Svg w={24} h={20} className="ml-[14px]"><path d="M1 7H4.500L10 2V18L4.500 13H1ZM13 7Q15 10 13 13M16 5Q19.500 10 16 15M19 2Q25 10 19 18" stroke="#000" strokeWidth="1.200" /></Svg>
        <Svg w={24} h={14} className="ml-[11px]"><path d="M1 1H21V13H1ZM21 5H23V9H21" stroke="#000" strokeWidth="1.400" /><path d="M3 3H9V11H3Z" fill="#000" /></Svg>
        <div className="ml-[10px] w-6 text-[24px] leading-none font-bold text-white [-webkit-text-stroke:0.700px_#222]">英</div>
        <div className="ml-[20px]"><SogouLogo size={25} /></div>
        <div className="ml-[26px] w-[90px] text-center text-[19px] leading-[25px]"><div>7:01</div><div>2023/8/9</div></div>
        <Svg w={24} h={24} className="ml-[31px]"><path d="M0 0H24V19H15L11 24L7 19H0Z" fill="#000" /><path d="M5 5.500H19M5 9.500H19M5 13.500H14" stroke="#fff" strokeWidth="1.200" /></Svg>
        <div className="mr-[6px] ml-[31px] h-[55px] w-px bg-[#a5b59b]" />
      </div>
    </div>
  );
}

export default function App() {
  return (
    <div className={`relative flex h-[1080px] w-[1920px] flex-col overflow-hidden bg-[#e3e4e6] leading-tight text-black ${UI}`}>
      <TitleBar />
      <MenuBar />
      <div className="flex h-[907px] shrink-0">
        <Library />
        <div className="flex w-[1720px] flex-col border border-[#666]">
          <Tabs />
          <TopBar />
          <div className="relative h-[830px]">
            <Wallpaper />
            <div className="relative flex h-full">
              <Dock />
              <div className="ml-px flex w-[125px] flex-col items-center pt-px text-[15px] text-white [text-shadow:1px_1px_1px_#000]">
                <div className="flex h-[102px] w-full flex-col items-center rounded-md bg-white/20 pt-2"><Folder name="home" /><span className="mt-[2px]">rhy</span></div>
                <Svg w={37} h={46} className="mt-[8px] -ml-px"><rect x=".5" y=".5" width="36" height="45" rx="5" fill="#ccc" stroke="#777" /><path d="M4 8Q3 3 7 2H30Q34 3 33 8L27 6Q18 4 10 6Z" fill="#555" /><path d="M6 8Q9 3 29 3L32 8Q20 6 6 9Z" fill="#fff" /></Svg>
                <FaRecycle size={19} className="-mt-[27px] mb-[8px] -ml-px text-[#1f8b20]" />
                <span className="mt-[4px]">回收站</span>
              </div>
            </div>
            <FileWindow />
            <ContextMenu />
          </div>
        </div>
      </div>
      <StatusBar />
      <Taskbar />
      <CommandPopup />
      <InputBar />
      <Annotations />
    </div>
  );
}
